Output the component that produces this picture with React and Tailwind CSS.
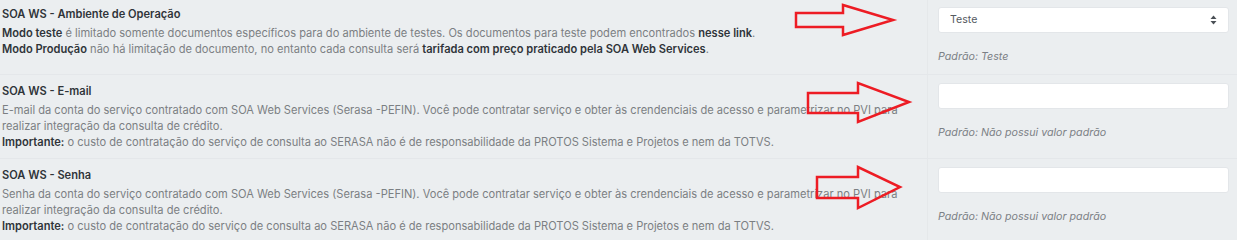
import React from 'react';

const settings = [
  {
    title: 'SOA WS - Ambiente de Operação',
    body: (
      <>
        <div>
          <b className="font-semibold text-[#2f3439]">Modo teste</b> é limitado somente documentos específicos para do ambiente de testes. Os documentos para teste podem encontrados{' '}
          <b className="font-semibold text-[#2f3439]">nesse link</b>.
        </div>
        <div>
          <b className="font-semibold text-[#2f3439]">Modo Produção</b> não há limitação de documento, no entanto cada consulta será{' '}
          <b className="font-semibold text-[#2f3439]">tarifada com preço praticado pela SOA Web Services</b>.
        </div>
      </>
    ),
    type: 'select',
    value: 'Teste',
    hint: 'Padrão: Teste',
  },
  {
    title: 'SOA WS - E-mail',
    body: (
      <>
        <div>
          E-mail da conta do serviço contratado com SOA Web Services (Serasa -PEFIN). Você pode contratar serviço e obter às crendenciais de acesso e parametrizar no PVI para realizar integração da consulta de crédito.
        </div>
        <div>
          <b className="font-semibold text-[#2f3439]">Importante:</b> o custo de contratação do serviço de consulta ao SERASA não é de responsabilidade da PROTOS Sistema e Projetos e nem da TOTVS.
        </div>
      </>
    ),
    type: 'input',
    hint: 'Padrão: Não possui valor padrão',
  },
  {
    title: 'SOA WS - Senha',
    body: (
      <>
        <div>
          Senha da conta do serviço contratado com SOA Web Services (Serasa -PEFIN). Você pode contratar serviço e obter às crendenciais de acesso e parametrizar no PVI para realizar integração da consulta de crédito.
        </div>
        <div>
          <b className="font-semibold text-[#2f3439]">Importante:</b> o custo de contratação do serviço de consulta ao SERASA não é de responsabilidade da PROTOS Sistema e Projetos e nem da TOTVS.
        </div>
      </>
    ),
    type: 'input',
    hint: 'Padrão: Não possui valor padrão',
  },
];

// red outline arrows pasted on top of the screenshot
const arrows = [
  '796,13 843,13 843,5 893,20 843,35 843,27 796,27',
  '808,93 858,93 858,83 909,102 858,122 858,113 808,113',
  '817,177 858,177 858,167 900,187 858,208 858,198 817,198',
];

const SettingRow = ({ item, first, last }) => (
  <div className={`flex ${last ? '' : 'border-b border-[#e4e7ea]'}`}>
    <div className={`flex-1 pl-[2px] pr-2 pb-2 text-[11.1px] leading-4 text-[#7b7f83] ${first ? 'pt-[6px]' : 'pt-2'}`}>
      <div className="mb-[3px] font-semibold text-[#2f3439]">{item.title}</div>
      {item.body}
    </div>
    <div className={`w-[310px] border-l border-[#e5e8ea] pl-[10px] pr-2 ${first ? 'pt-[7px] pb-[9px]' : 'pt-2 pb-2'}`}>
      {item.type === 'select' ? (
        <div className="flex h-[26px] items-center justify-between rounded-[3px] border border-[#e3e6e9] bg-white pl-[11px] pr-[11px] text-[10.6px] text-[#555a5f]">
          <span>{item.value}</span>
          <svg width="7" height="10" viewBox="0 0 7 10">
            <path d="M3.5 0.5 L6.5 4 L0.5 4 Z" fill="#4a4f55" />
            <path d="M3.5 9.5 L6.5 6 L0.5 6 Z" fill="#4a4f55" />
          </svg>
        </div>
      ) : (
        <div className="h-[26px] rounded-[3px] border border-[#e3e6e9] bg-white" />
      )}
      <div className="mt-4 text-[10.7px] leading-4 italic text-[#7b8085]">{item.hint}</div>
    </div>
  </div>
);

export default function App() {
  return (
    <div className="relative h-[240px] w-[1237px] overflow-hidden bg-[#ebeef0] font-['Inter',sans-serif]">
      {settings.map((item, i) => (
        <SettingRow key={i} item={item} first={i === 0} last={i === settings.length - 1} />
      ))}
      <svg className="pointer-events-none absolute left-0 top-0" width="1237" height="240">
        {arrows.map((pts, i) => (
          <polygon key={i} points={pts} fill="none" stroke="#ed1c24" strokeWidth="2.5" />
        ))}
      </svg>
    </div>
  );
}
